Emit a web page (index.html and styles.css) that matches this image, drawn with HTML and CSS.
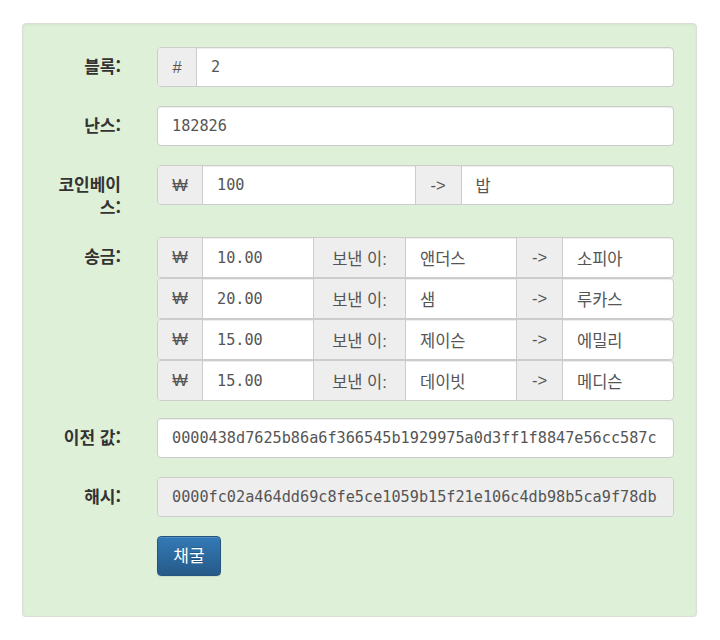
FILE: index.html
```html
<!DOCTYPE html>
<html lang="ko">
<head>
<meta charset="utf-8">
<title>블록</title>
<link rel="stylesheet" href="styles.css">
</head>
<body>
<div class="page">
  <div class="well">
    <div class="group">
      <div class="label">블록:</div>
      <div class="field">
        <div class="ig">
          <div class="addon w-hash">#</div>
          <div class="inp"><span class="val">2</span></div>
        </div>
      </div>
    </div>
    <div class="group">
      <div class="label">난스:</div>
      <div class="field">
        <div class="ig">
          <div class="inp"><span class="val">182826</span></div>
        </div>
      </div>
    </div>
    <div class="group">
      <div class="label">코인베이스:</div>
      <div class="field">
        <div class="ig">
          <div class="addon w-won">₩</div>
          <div class="inp"><span class="val">100</span></div>
          <div class="addon w-arrow">-&gt;</div>
          <div class="inp"><span class="val ko">밥</span></div>
        </div>
      </div>
    </div>
    <div class="group tx-group">
      <div class="label">송금:</div>
      <div class="field">
        <div class="ig tx">
          <div class="addon w-won">₩</div>
          <div class="inp"><span class="val">10.00</span></div>
          <div class="addon w-from">보낸 이:</div>
          <div class="inp"><span class="val ko">앤더스</span></div>
          <div class="addon w-arrow">-&gt;</div>
          <div class="inp"><span class="val ko">소피아</span></div>
        </div>
        <div class="ig tx">
          <div class="addon w-won">₩</div>
          <div class="inp"><span class="val">20.00</span></div>
          <div class="addon w-from">보낸 이:</div>
          <div class="inp"><span class="val ko">샘</span></div>
          <div class="addon w-arrow">-&gt;</div>
          <div class="inp"><span class="val ko">루카스</span></div>
        </div>
        <div class="ig tx">
          <div class="addon w-won">₩</div>
          <div class="inp"><span class="val">15.00</span></div>
          <div class="addon w-from">보낸 이:</div>
          <div class="inp"><span class="val ko">제이슨</span></div>
          <div class="addon w-arrow">-&gt;</div>
          <div class="inp"><span class="val ko">에밀리</span></div>
        </div>
        <div class="ig tx">
          <div class="addon w-won">₩</div>
          <div class="inp"><span class="val">15.00</span></div>
          <div class="addon w-from">보낸 이:</div>
          <div class="inp"><span class="val ko">데이빗</span></div>
          <div class="addon w-arrow">-&gt;</div>
          <div class="inp"><span class="val ko">메디슨</span></div>
        </div>
      </div>
    </div>
    <div class="group">
      <div class="label">이전 값:</div>
      <div class="field">
        <div class="ig">
          <div class="inp"><span class="val">0000438d7625b86a6f366545b1929975a0d3ff1f8847e56cc587c</span></div>
        </div>
      </div>
    </div>
    <div class="group">
      <div class="label">해시:</div>
      <div class="field">
        <div class="ig readonly">
          <div class="inp"><span class="val">0000fc02a464dd69c8fe5ce1059b15f21e106c4db98b5ca9f78db</span></div>
        </div>
      </div>
    </div>
    <div class="group last">
      <div class="label"></div>
      <div class="field">
        <button class="btn" type="button">채굴</button>
      </div>
    </div>
  </div>
</div>
</body>
</html>
```

FILE: styles.css
```css
* { box-sizing: border-box; }

html, body {
  margin: 0;
  padding: 0;
  background: #ffffff;
}

body {
  font-family: "Liberation Sans", "Noto Sans CJK KR", sans-serif;
  font-size: 16px;
  color: #333333;
}

.page {
  padding: 23px 0 0 22px;
}

.well {
  width: 675px;
  background: #dff0d8;
  border: 1px solid #d9dfd5;
  border-radius: 4px;
  box-shadow: inset 0 1px 3px rgba(0, 0, 0, 0.05), 0 1px 1px rgba(0, 0, 0, 0.06);
  padding: 23px 22px 40px 0;
}

.group {
  display: flex;
  margin-bottom: 19px;
}

.group.tx-group { margin-bottom: 17px; }
.group.last { margin-bottom: 0; }

.label {
  flex: 0 0 134px;
  padding: 8px 36px 0 18px;
  text-align: right;
  font-family: "Noto Sans CJK KR", sans-serif;
  font-weight: bold;
  font-size: 17px;
  line-height: 22.5px;
  color: #333333;
}

.field {
  flex: 1 1 0;
  min-width: 0;
  display: flex;
  flex-direction: column;
  align-items: stretch;
}

.ig {
  display: flex;
  min-width: 0;
  height: 40px;
  border: 1px solid #cccccc;
  border-radius: 4px;
  overflow: hidden;
  background: #ffffff;
  box-shadow: inset 0 1px 1px rgba(0, 0, 0, 0.075);
}

.ig.tx { height: 41px; }

.ig.readonly { background: #eeeeee; }

.ig > * + * { border-left: 1px solid #cccccc; }

.addon {
  flex: 0 0 auto;
  display: flex;
  align-items: center;
  justify-content: center;
  background: #eeeeee;
  color: #555555;
  font-family: "Liberation Sans", "Noto Sans CJK KR", sans-serif;
  font-size: 16.5px;
}

.w-hash { flex-basis: 38px; }
.w-won { flex-basis: 44px; }
.w-arrow { flex-basis: 46px; }
.w-from { flex-basis: 92px; }

.inp {
  flex: 1 1 0;
  min-width: 0;
  display: flex;
  align-items: center;
  padding: 0 14px;
  color: #555555;
  font-family: "DejaVu Sans Mono", "Noto Sans CJK KR", monospace;
  font-size: 15.2px;
}

.ig.readonly .inp { background: #eeeeee; }

.val {
  display: block;
  width: 100%;
  overflow: hidden;
  white-space: nowrap;
}

.val.ko {
  font-family: "Noto Sans CJK KR", sans-serif;
  font-size: 16.5px;
}

.btn {
  align-self: flex-start;
  width: 64px;
  height: 40px;
  padding: 0 0 3px 0;
  border: 1px solid #245580;
  border-radius: 4px;
  background: linear-gradient(to bottom, #337ab7 0%, #265a88 100%);
  box-shadow: inset 0 1px 0 rgba(255, 255, 255, 0.15), 0 1px 1px rgba(0, 0, 0, 0.075);
  color: #ffffff;
  text-shadow: 0 -1px 0 rgba(0, 0, 0, 0.2);
  font-family: "Noto Sans CJK KR", sans-serif;
  font-size: 17px;
  line-height: 1;
  cursor: pointer;
}
```
